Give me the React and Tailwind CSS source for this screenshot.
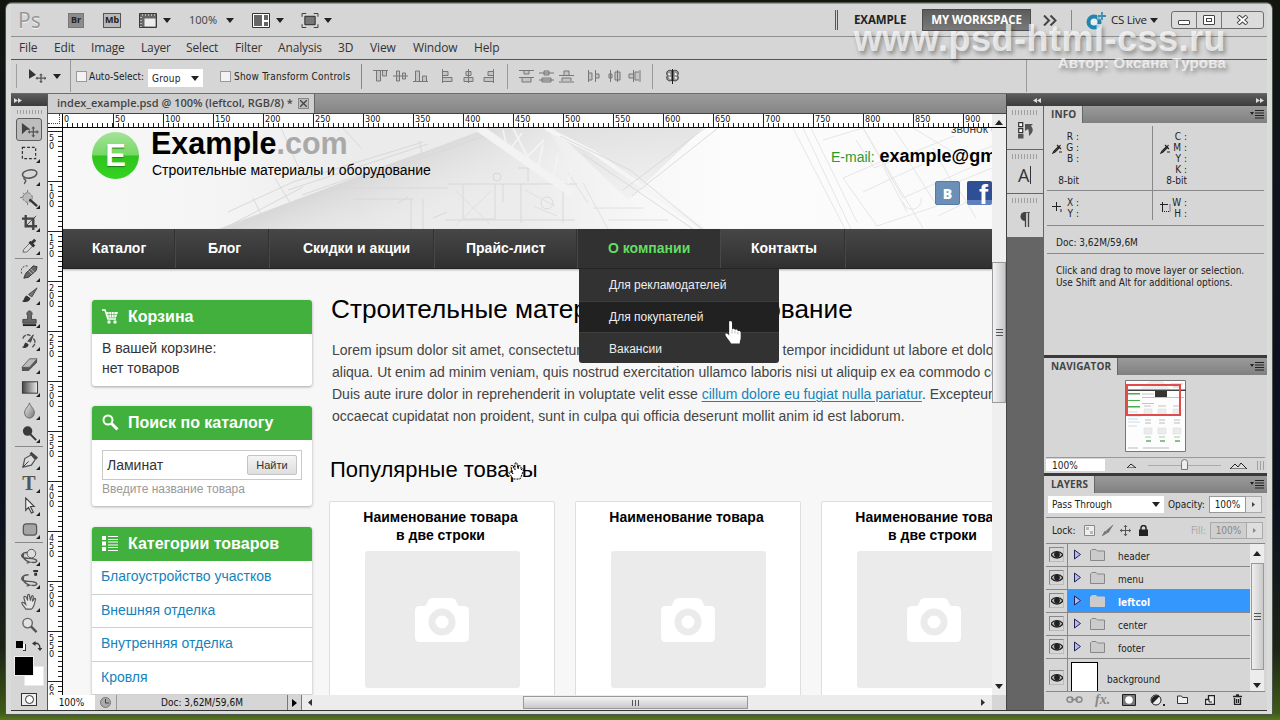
import React from 'react'
import { clsx } from 'clsx'

const menuItems = [
  { label: 'File', width: 'w-[35px]' },
  { label: 'Edit', width: 'w-[37px]' },
  { label: 'Image', width: 'w-[50px]' },
  { label: 'Layer', width: 'w-[45px]' },
  { label: 'Select', width: 'w-[49px]' },
  { label: 'Filter', width: 'w-[43px]' },
  { label: 'Analysis', width: 'w-[60px]' },
  { label: '3D', width: 'w-[32px]' },
  { label: 'View', width: 'w-[43px]' },
  { label: 'Window', width: 'w-[61px]' },
  { label: 'Help', width: 'w-[40px]' }
]

const navItems = [
  { label: 'Каталог', box: 'w-[113px] pl-[29px]' },
  { label: 'Блог', box: 'w-[94px] pl-[32px]' },
  { label: 'Скидки и акции', box: 'w-[165px] pl-[33px]' },
  { label: 'Прайс-лист', box: 'w-[143px] pl-[31px]' },
  { label: 'О компании', box: 'w-[143px] pl-[30px]', active: true },
  { label: 'Контакты', box: 'w-[125px] pl-[30px]' }
]

const categories = ['Благоустройство участков', 'Внешняя отделка', 'Внутренняя отделка', 'Кровля']

const products = [
  ['Наименование товара', 'в две строки'],
  ['Наименование товара'],
  ['Наименование товара', 'в две строки']
]

const layers = ['header', 'menu', 'leftcol', 'center', 'footer']

const hMarks = Array.from({ length: 19 }, (_, i) => i * 50)
const vMarks = Array.from({ length: 12 }, (_, i) => (i + 1) * 50)

const Caret = ({ className }) => (
  <svg className={clsx('h-[5px] w-[8px] shrink-0', className)} viewBox="0 0 8 5">
    <path d="M0 0h8L4 5z" fill="#222" />
  </svg>
)

const Grip = ({ className }) => (
  <div className={clsx('bg-[radial-gradient(#8d8d8d_0.7px,transparent_0.9px)] bg-[length:3px_2px]', className)} />
)

/* ---------- top bars ---------- */

const AppBar = () => (
  <div className="flex h-[33px] shrink-0 items-center border-b border-[#8f8f8f] pl-[7px]">
    <span className="w-[50px] font-['Open_Sans',sans-serif] text-[21px] leading-none text-[#979797] [text-shadow:0_1px_0_#f4f4f4]">Ps</span>
    <div className="flex h-[15px] w-[16px] items-center justify-center border border-[#777] bg-[#8c8c8c] font-['Noto_Sans',sans-serif] text-[9px] font-bold text-[#222]">Br</div>
    <div className="ml-[19px] flex h-[15px] w-[18px] items-center justify-center border border-[#555] bg-[#b9b9b9] font-['Noto_Sans',sans-serif] text-[9px] font-bold text-[#222]">Mb</div>
    <svg className="ml-[18px] h-[15px] w-[18px]" viewBox="0 0 18 15">
      <path d="M.5.5h17v14H.5z" fill="#666" stroke="#3a3a3a" />
      <path d="M5.500 5.500h11v8h-11z" fill="#ececec" />
      <path d="M3 2h14M2 4v10" stroke="#ccc" strokeDasharray="1 2" strokeWidth="1.500" />
    </svg>
    <Caret className="ml-[6px]" />
    <span className="ml-[18px] w-[28px] font-['Noto_Sans',sans-serif] text-[11px] text-[#4a4a4a]">100%</span>
    <Caret className="ml-[9px]" />
    <svg className="ml-[18px] h-[15px] w-[18px]" viewBox="0 0 18 15">
      <path d="M.5.5h17v14H.5z" fill="#fff" stroke="#333" />
      <path d="M2 2h8v11H2zM12 2h4v5h-4zM12 9h4v4h-4z" fill="#666" />
    </svg>
    <Caret className="ml-[6px]" />
    <svg className="ml-[17px] h-[15px] w-[18px]" viewBox="0 0 18 16">
      <path d="M.5 4V.5H5M13 .5h4.500V4M17.500 12v3.500H13M5 15.500H.5V12" fill="none" stroke="#333" />
      <path d="M3.500 3.500h11v9h-11z" fill="#777" stroke="#222" />
    </svg>
    <Caret className="ml-[5px]" />

    <div className="ml-auto mr-[16px] h-[20px] w-[3px] border-x border-[#555]" />
    <span className="w-[68px] font-['Open_Sans',sans-serif] text-[11.500px] font-bold tracking-[-0.1px] text-[#222]">EXAMPLE</span>
    <div className="flex h-[22px] w-[109px] items-center justify-center border border-[#4d4d4d] bg-gradient-to-b from-[#5c5c5c] to-[#7a7a7a] font-['Open_Sans',sans-serif] text-[11.500px] font-bold tracking-[-0.1px] whitespace-nowrap text-white">MY WORKSPACE</div>
    <svg className="ml-[12px] h-[11px] w-[14px]" viewBox="0 0 14 11">
      <path d="M1 .5l5 5-5 5M7.500 .5l5 5-5 5" fill="none" stroke="#444" strokeWidth="2" />
    </svg>
    <div className="ml-[14px] h-[20px] w-px bg-[#888]" />
    <svg className="ml-[14px] h-[19px] w-[20px]" viewBox="0 0 20 19">
      <circle cx="8" cy="11" r="5.500" fill="#e8f0f2" stroke="#2385ab" strokeWidth="4" />
      <path d="M11 1.500h9v7h-9z" fill="#d6d6d6" opacity=".6" />
      <path d="M16 1v8M12 5h8" stroke="#3a92b2" strokeWidth="1.800" />
    </svg>
    <span className="ml-[5px] w-[39px] whitespace-nowrap font-['Open_Sans',sans-serif] text-[11.500px] tracking-[-0.3px] text-[#222]">CS Live</span>
    <Caret />
    <div className="mr-[3px] ml-[13px] flex h-[18px] w-[93px] rounded-[3px] border border-[#6d6d6d] bg-[#dcdcdc]">
      <div className="flex w-[25px] items-center justify-center border-r border-[#777]">
        <div className="mt-[5px] h-[5px] w-[12px] rounded-[1px] border border-[#444] bg-white" />
      </div>
      <div className="flex w-[25px] items-center justify-center border-r border-[#777]">
        <div className="flex h-[10px] w-[12px] items-center justify-center rounded-[1px] border border-[#444] bg-white">
          <div className="h-[4px] w-[6px] border border-[#444]" />
        </div>
      </div>
      <div className="flex flex-1 items-center justify-center">
        <svg className="h-[10px] w-[13px]" viewBox="0 0 13 10">
          <path d="M2 1l9 8M11 1L2 9" stroke="#444" strokeWidth="4" />
          <path d="M2.500 1.500l8 7M10.500 1.500l-8 7" stroke="#fff" strokeWidth="2" />
        </svg>
      </div>
    </div>
  </div>
)

const MenuBar = () => (
  <div className="flex h-[23px] shrink-0 items-center border-b border-[#555] pl-[8px] font-['Open_Sans',sans-serif] text-[12px] tracking-[-0.15px] text-[#333]">
    {menuItems.map(item => (
      <span key={item.label} className={clsx('shrink-0 whitespace-nowrap', item.width)}>{item.label}</span>
    ))}
  </div>
)

const alignIcons = [
  { gap: 'ml-[11px]', d: 'M0 1.500h15M3.500 2v10h4V2M9.500 2v5h4V2' },
  { gap: 'ml-[5px]', d: 'M0 7h15M3.500 2v10h3V2zM9.500 4v6h3V4z' },
  { gap: 'ml-[5px]', d: 'M0 12.500h15M2.500 12V2h4v10M9.500 12V7h4v5' },
  { gap: 'ml-[13px]', d: 'M1.500 0v14M2 2.500h5v4H2M2 8.500h9v4H2' },
  { gap: 'ml-[5px]', d: 'M7.500 0v14M5 2.500h5v4H5zM3 8.500h9v4H3z' },
  { gap: 'ml-[5px]', d: 'M12.500 0v14M12 2.500H7v4h5M12 8.500H3v4h9' }
]

const distributeIcons = [
  { gap: 'ml-[11px]', d: 'M0 1.500h15M0 8.500h15M5 2v3h5V2M3 9v4h9V9' },
  { gap: 'ml-[5px]', d: 'M0 4h15M0 11h15M5 2h5v4H5zM3 9h9v4H3z' },
  { gap: 'ml-[5px]', d: 'M0 6.500h15M0 13h15M5 6V2h5v4M3 12V9h9v3' },
  { gap: 'ml-[13px]', d: 'M1.500 1v12M8.500 1v12M2 4h3v7H2M9 5h3v4H9' },
  { gap: 'ml-[5px]', d: 'M3.500 1v12M10.500 1v12M2 5h3v4H2zM8 3h5v8H8z' },
  { gap: 'ml-[5px]', d: 'M6.500 1v12M13 1v12M6 5H2v4h4M12 3H8v8h4' }
]

const LineIcon = ({ d, gap }) => (
  <svg className={clsx('h-[14px] w-[15px] shrink-0', gap)} viewBox="0 0 15 14">
    <path d={d} fill="#c4c4c4" stroke="#777" />
  </svg>
)

const OptionsBar = () => (
  <div className="flex h-[34px] shrink-0 items-center border-b border-[#6c6c6c] pb-px font-['DejaVu_Sans_Condensed','Noto_Sans',sans-serif] text-[10px] text-[#222]">
    <Grip className="ml-[4px] h-[24px] w-[4px]" />
    <svg className="ml-[9px] h-[14px] w-[18px]" viewBox="0 0 18 16" preserveAspectRatio="none">
      <path d="M1 0l7 6.500-7 4.500z" fill="#333" />
      <path d="M13 6v9M8.500 10.500h9" stroke="#555" strokeWidth="1.300" />
      <path d="M13 5l2 2h-4zM13 16l2-2h-4zM7.500 10.500l2-2v4zM18.500 10.500l-2-2v4z" fill="#555" />
    </svg>
    <Caret className="ml-[7px] h-[4px] w-[6px]" />
    <div className="ml-[9px] h-full w-px bg-[#999]" />
    <div className="ml-[5px] h-[11px] w-[11px] border border-[#999] bg-[#f2f2f2]" />
    <span className="ml-[2px] w-[57px] whitespace-nowrap">Auto-Select:</span>
    <div className="mt-[4px] ml-[2px] flex h-[18px] w-[55px] items-center bg-white pl-[4px]">
      <span className="w-[39px] tracking-[0.3px]">Group</span>
      <Caret />
    </div>
    <div className="ml-[17px] h-[11px] w-[11px] border border-[#999] bg-[#f2f2f2]" />
    <span className="ml-[3px] w-[117px] tracking-[0.200px] whitespace-nowrap">Show Transform Controls</span>
    <div className="ml-[10px] h-[25px] w-px bg-[#888]" />
    {alignIcons.map(icon => <LineIcon key={icon.d} {...icon} />)}
    <div className="ml-[11px] h-[25px] w-px bg-[#999]" />
    {distributeIcons.map(icon => <LineIcon key={icon.d} {...icon} />)}
    <div className="ml-[10px] h-[25px] w-px bg-[#999]" />
    <svg className="ml-[12px] h-[15px] w-[15px]" viewBox="0 0 15 16">
      <path d="M7 2C3 0 0 3 2 7c-2 4 1 7 5 5zM8 2c4-2 7 1 5 5 2 4-1 7-5 5z" fill="#999" stroke="#333" />
      <path d="M7.500 0v16" stroke="#111" />
      <path d="M3 5l2 1M10 5l2 1M4 9l2 1M10 9l2 1" stroke="#fff" strokeWidth="1.500" />
    </svg>
    <div className="mr-[240px] ml-auto h-full w-px bg-[#999]" />
  </div>
)

/* ---------- toolbox ---------- */

const toolGroups = [
  [
    <><path d="M2 2l9 7-4 .5L2 14z" fill="#444" /><path d="M14 7v9M9.500 11.500h9" stroke="#555" strokeWidth="1.300" /><path d="M14 5.500l2 2.500h-4zM14 17.500l2-2.500h-4zM8 11.500l2.500-2v4zM20 11.500l-2.500-2v4z" fill="#555" /></>,
    <path d="M2.500 3.500h14v12h-14z" fill="none" stroke="#333" strokeDasharray="3 2" strokeWidth="1.300" />,
    <path d="M5 11C1 9 2 5 8 3.500s11 .5 9.500 4S9 13 5 11zm0 0c-3 2 2 2 1 4-.5 1-2 2-1 3" fill="none" stroke="#555" strokeWidth="1.500" />,
    <><circle cx="8" cy="8" r="5" fill="#bbb" stroke="#666" strokeDasharray="2 2" /><path d="M8 0v3M8 13v3M0 8h3M3 3l2 2" stroke="#777" /><path d="M10 10l8 7" stroke="#333" strokeWidth="2.500" /></>,
    <><path d="M6 2v12h12M2 6h12v12" fill="none" stroke="#444" strokeWidth="2.500" /><path d="M6 14L17 3" stroke="#444" strokeWidth="1" /></>,
    <><path d="M3 17l1-3 7-7 3 3-7 7z" fill="#ddd" stroke="#666" /><path d="M10 6l5 5M12.500 7.500L16 4" stroke="#333" strokeWidth="3" /></>
  ],
  [
    <><path d="M8 3C2 3 0 7 2 12" fill="none" stroke="#444" strokeDasharray="2 1.500" /><path d="M4 16l2-5 8-8 4 1-1 4-8 7z" fill="#666" stroke="#333" /><path d="M9 8l4 4M11 6l4 4" stroke="#bbb" /></>,
    <><path d="M2 16c3-1 2-5 5-6l4 3c-1 4-5 5-9 3z" fill="#333" /><path d="M9 9l9-7-5.500 9.500z" fill="#777" stroke="#444" /></>,
    <><path d="M10 2a3 3 0 0 1 2 5v4h5v4H3v-4h5V7a3 3 0 0 1 2-5z" fill="#666" stroke="#444" /><path d="M3 17h14" stroke="#222" strokeWidth="2" /></>,
    <><path d="M2 16c3-1 2-4 4-5l3 2c0 3-3 5-7 3z" fill="#333" /><path d="M8 10l6-7-3 8" fill="#555" stroke="#444" /><path d="M3 7a5 5 0 0 1 8-3M14 7c3 2 2 7-1 9" fill="none" stroke="#555" strokeWidth="1.500" strokeDasharray="5 1" /></>,
    <><path d="M2 13l8-9h8l-8 9z" fill="#bbb" stroke="#666" /><path d="M2 13v4h7l9-9V4l-8 9z" fill="#555" /></>,
    <><rect x="2.500" y="4" width="16" height="12" fill="url(#toolGradient)" stroke="#333" /></>,
    <path d="M10 2c1 4 6 7 5 11a5 5 0 0 1-10 0c-1-4 4-7 5-11z" fill="url(#dropGradient)" stroke="#666" />,
    <><circle cx="8" cy="7.500" r="5" fill="#3a3a3a" /><path d="M11 11l6 6" stroke="#333" strokeWidth="2" /></>
  ],
  [
    <><path d="M3 17L5 8l7-4 4 5-4 6z" fill="#ddd" stroke="#555" strokeWidth="1.300" /><path d="M11 2l7 6" stroke="#444" strokeWidth="3" /><path d="M3 17l6-6" stroke="#333" /></>,
    null,
    <path d="M6 1v13l3-3 3 6 2-1-3-6h4z" fill="#eee" stroke="#444" strokeWidth="1.200" />,
    <rect x="3.500" y="4" width="14" height="12" rx="3" fill="#a5a5a5" stroke="#555" strokeWidth="1.300" />
  ],
  [
    <><path d="M9 6C3 5 0 9 3 11s8 0 13 2c4 2 0 4-4 3M4 6c-2 5 1 8 6 10l-3 1" fill="none" stroke="#555" strokeWidth="1.500" /><circle cx="12" cy="7" r="4.500" fill="#ddd" stroke="#555" /></>,
    <><path d="M9 5C3 5 0 9 3 11s8 0 13 2c4 2 0 4-4 3M4 6c-2 5 1 8 6 10l-3 1" fill="none" stroke="#555" strokeWidth="1.500" /><path d="M14 0h5v2h-5zM15 3h3v3h-3z" fill="#333" /></>,
    <path d="M6 17c-1-3-5-5-4-7 1-1 3 1 4 2L4 5c0-2 2-2 3 0l1 3V3c0-2 2-2 2 0l1 5 1-4c1-2 2-1 2 0l-1 5 2-3c1-1 2 0 1 2-1 4-1 7-4 9z" fill="#e4e4e4" stroke="#555" strokeWidth="1.200" />,
    <><circle cx="8" cy="7.500" r="5" fill="#e2e2e2" stroke="#666" strokeWidth="1.500" /><path d="M11.500 11l6 6" stroke="#555" strokeWidth="2.500" /></>
  ]
]

const Toolbox = () => (
  <div className="flex w-[37px] shrink-0 flex-col border-r border-[#555]">
    <div className="flex h-[12px] shrink-0 items-center bg-gradient-to-b from-[#5d5d5d] to-[#3c3c3c] pl-[3px]">
      <svg className="h-[5px] w-[8px]" viewBox="0 0 8 5"><path d="M0 0l4 2.500L0 5zM4 0l4 2.500L4 5z" fill="#ddd" /></svg>
    </div>
    <Grip className="mx-[5px] mt-[4px] mb-[4px] h-[4px] shrink-0" />
    <svg className="absolute size-0">
      <defs>
        <linearGradient id="toolGradient"><stop stopColor="#444" /><stop offset="1" stopColor="#eee" /></linearGradient>
        <linearGradient id="dropGradient" x2="1" y2="1"><stop stopColor="#eee" /><stop offset="1" stopColor="#777" /></linearGradient>
      </defs>
    </svg>
    {toolGroups.map((group, g) => (
      <div key={g} className={clsx('mx-[4px] flex shrink-0 flex-col', g > 0 && 'mt-[2px] border-t border-[#888] pt-px')}>
        {group.map((icon, i) => (
          <div
            key={i}
            className={clsx(
              'relative flex h-[23px] items-center justify-center',
              g === 0 && i === 0 && 'mx-px rounded-[3px] border border-[#5d5d5d] bg-[#bdbdbd]'
            )}
          >
            {icon
              ? <svg className="h-[18px] w-[19px]" viewBox="0 0 20 19">{icon}</svg>
              : <span className="font-['Liberation_Serif',serif] text-[20px] leading-none font-bold text-[#555]">T</span>}
            {!(g === 0 && i === 0) && !(g === 3 && i === 3) && (
              <svg className="absolute right-[3px] bottom-[1px] size-[4px]" viewBox="0 0 4 4"><path d="M4 0v4H0z" fill="#222" /></svg>
            )}
          </div>
        ))}
      </div>
    ))}
    <div className="flex h-[20px] items-center justify-between pr-[5px] pl-[5px]">
      <div className="flex">
        <div className="size-[7px] bg-black" />
        <div className="mt-[3px] h-[7px] w-[3px] border-r border-b border-[#333] bg-white" />
      </div>
      <svg className="h-[10px] w-[10px]" viewBox="0 0 10 10">
        <path d="M2 2.500c4-1 6 1 6 5" fill="none" stroke="#333" strokeWidth="1.300" />
        <path d="M0 2.500L3.500 0v5zM8 10L5.500 7h5z" fill="#333" />
      </svg>
    </div>
    <div className="relative ml-[3px] h-[30px] w-[30px] shrink-0">
      <div className="absolute right-0 bottom-0 size-[20px] border border-[#e8e8e8] bg-white" />
      <div className="absolute top-0 left-0 size-[20px] border border-[#eee] bg-black" />
    </div>
    <div className="mt-[7px] ml-[10px] flex h-[13px] w-[16px] items-center justify-center border border-[#333] bg-[#eee]">
      <div className="size-[9px] rounded-full border border-[#333] bg-white" />
    </div>
  </div>
)

/* ---------- the document ---------- */

const HRuler = () => (
  <div className="flex h-[14px] shrink-0 border-b border-black bg-white">
    <div className="w-[15px] shrink-0 border-r border-black">
      <div className="h-[10px] w-[12px] border-r border-b border-dotted border-[#444]" />
    </div>
    <div className="flex w-[929px] overflow-hidden">
      {hMarks.map(mark => (
        <div key={mark} className="flex w-[50px] shrink-0 flex-col justify-between border-l border-[#222] first:border-l-0">
          <span className="h-[9px] pl-px font-['DejaVu_Sans_Condensed','Noto_Sans',sans-serif] text-[9px] leading-[10px] text-[#111]">{mark}</span>
          <div className="h-[4px] bg-[repeating-linear-gradient(to_right,transparent_0_4px,#222_4px_5px)]" />
        </div>
      ))}
    </div>
    <div className="flex flex-1 items-center justify-center bg-[#ececec]">
      <Caret className="mt-[4px] h-[4px] w-[7px] rotate-180" />
    </div>
  </div>
)

const VRuler = () => (
  <div className="w-[15px] shrink-0 overflow-hidden border-r border-black bg-white">
    <div className="h-[3px]" />
    {vMarks.map(mark => (
      <div key={mark} className="flex h-[50px] justify-between border-t border-[#222]">
        <div className="flex flex-col pt-[2px] pl-px font-['DejaVu_Sans_Condensed','Noto_Sans',sans-serif] text-[9px] leading-[8px] text-[#111]">
          {String(mark).split('').map((digit, i) => <span key={i}>{digit}</span>)}
        </div>
        <div className="w-[4px] bg-[repeating-linear-gradient(to_bottom,transparent_0_4px,#222_4px_5px)]" />
      </div>
    ))}
  </div>
)

const Blueprint = () => (
  <svg className="absolute inset-0 h-full w-full" viewBox="0 0 929 101" preserveAspectRatio="none">
    <defs>
      <linearGradient id="paper">
        <stop offset="0" stopColor="#f7f7f7" />
        <stop offset=".16" stopColor="#f5f5f5" />
        <stop offset=".32" stopColor="#ebebeb" />
        <stop offset=".5" stopColor="#ececec" />
        <stop offset=".62" stopColor="#f7f7f7" />
        <stop offset=".72" stopColor="#fcfcfc" />
        <stop offset="1" stopColor="#fafafa" />
      </linearGradient>
      <linearGradient id="fold" gradientUnits="userSpaceOnUse" x1="300" y1="20" x2="340" y2="110">
        <stop offset="0" stopColor="#d2d2d2" stopOpacity="0" />
        <stop offset=".2" stopColor="#cdcdcd" stopOpacity=".7" />
        <stop offset="1" stopColor="#e6e6e6" stopOpacity="0" />
      </linearGradient>
      <linearGradient id="corner" x1="0" y1="0" x2="0" y2="1">
        <stop offset="0" stopColor="#dadada" />
        <stop offset="1" stopColor="#f0f0f0" />
      </linearGradient>
    </defs>
    <path d="M0 0h929v101H0z" fill="url(#paper)" />
    <path d="M155 101L425 0h60l60 101z" fill="url(#fold)" />
    <path d="M490 0h150l-75 72z" fill="url(#corner)" opacity=".7" />
    <path d="M165 84l65-30 130-40M225 62l140-46M240 72L430 5M218 0l20 45M280 0l18 20M356 13l3 12-120 42M160 101l80-42M212 50l22 36M190 70l12 24" fill="none" stroke="#d9d9d9" />
    <path d="M265 60h120M290 71h60M348 71v30M360 71v30M384 56h130M400 56v35h32V56M458 56v39M382 92h130M465 40v14M455 40h22M440 56v18M500 56v39M335 75l10-6M370 90l14-6" fill="none" stroke="#d8d8d8" />
    <path d="M393 63l35 34m0-34l-35 34M462 62l30 16M470 78l24 10M505 45l20 30M520 55l25 46M530 80h50M545 92h60" stroke="#e0e0e0" fill="none" />
    <path d="M416 0l94 66" stroke="#f3f3f3" strokeWidth="8" fill="none" />
    <path d="M482 0l48 24 110 77" stroke="#f5f5f5" strokeWidth="4" fill="none" />
    <path d="M497 8l70 34 72 59M520 26L630 101M655 0l-86 68M642 0l-82 62" stroke="#d6d6d6" fill="none" strokeWidth=".8" />
    <path d="M440 2l5 22M445 24l14-19M450 0l22 44M463 30l18-18M474 45l6-28M490 50l5-24M505 56l4-19" stroke="#f3f3f3" strokeWidth="1.800" fill="none" />
    <path d="M740 0l48 101M748 0l46 94M730 0l52 101M760 12l40-12 40 70 89-40M800 0l60 100M780 50l60-26 34 54-60 20zM800 64l60-28M820 38l24 46M840 74a9 9 0 1 0 18-4M850 0l50 30 29-12M870 20l20 36 39-16M875 88l54-26M793 12l18 28 80-32M830 0l15 22M895 60l18 30" fill="none" stroke="#e6e6e6" />
    <circle cx="434" cy="49" r="4" fill="none" stroke="#d8d8d8" />
    <circle cx="484" cy="75" r="6" fill="none" stroke="#dadada" />
  </svg>
)

const SiteHeader = () => (
  <div className="relative h-[101px] shrink-0">
    <Blueprint />
    <div className="relative flex h-full">
      <div className="mt-[4px] ml-[29px] flex size-[47px] items-center justify-center rounded-full bg-[linear-gradient(to_bottom,#a5e39a_0%,#77d866_48%,#2fc41d_52%,#34d322_100%)] text-[31px] leading-none font-bold text-white [text-shadow:0_1px_1px_#1c7a12]">E</div>
      <div className="ml-[12px]">
        <p className="mt-[-1px] text-[30.500px] leading-[32px] font-bold text-black">Example<span className="text-[#a9a9a9]">.com</span></p>
        <p className="mt-[3px] ml-px text-[14px] leading-[16px] whitespace-nowrap text-black">Строительные материалы и оборудование</p>
      </div>
      <div className="ml-auto w-[162px] overflow-hidden">
        <p className="mt-[-6px] ml-[121px] h-[14px] text-[12px] leading-[14px] whitespace-nowrap text-[#444]">звонок с</p>
        <p className="mt-[10px] ml-px text-[18px] leading-[20px] font-bold whitespace-nowrap text-black">
          <span className="mr-[5px] text-[14px] font-normal text-[#2a9a2f]">E-mail:</span>example@gmail.com
        </p>
        <div className="mt-[14px] ml-[105px] flex gap-[7px]">
          <div className="flex h-[24px] w-[25px] shrink-0 items-center justify-center rounded-[2px] border border-[#557ba5] bg-[#6c8fb8] font-['Open_Sans',sans-serif] text-[14px] font-extrabold text-white">B</div>
          <div className="h-[24px] w-[25px] shrink-0 overflow-hidden rounded-[2px] bg-[linear-gradient(to_bottom,#2f4f95_0_78%,#5f7fbf_78%)] pl-[12px] text-[27px] leading-[28px] font-bold text-white">f</div>
        </div>
      </div>
    </div>
  </div>
)

const SiteNav = () => (
  <div className="relative z-10 flex h-[40px] shrink-0 border-b border-[#252525] bg-gradient-to-b from-[#474747] to-[#303030] text-[14px] font-bold text-white shadow-[0_1px_2px_rgba(0,0,0,0.3)]">
    {navItems.map(item => (
      <div
        key={item.label}
        className={clsx(
          'flex shrink-0 items-center border-r border-[#484848] whitespace-nowrap shadow-[-1px_0_0_#323232_inset]',
          item.box,
          item.active && 'bg-[#313131] text-[#63dd63]'
        )}
      >
        {item.label}
      </div>
    ))}
    <div className="absolute top-[40px] left-[516px] w-[200px] overflow-hidden rounded-b-[3px] bg-[#323232] text-[12px] font-normal text-[#eee]">
      <p className="h-[32px] pl-[30px] leading-[32px]">Для рекламодателей</p>
      <p className="h-[32px] border-y border-[#3e3e3e] bg-[#212121] pl-[30px] leading-[30px]">Для покупателей</p>
      <p className="h-[30px] pl-[30px] leading-[32px]">Вакансии</p>
    </div>
    <svg className="absolute top-[91px] left-[661px] h-[25px] w-[18px]" viewBox="0 0 18 26">
      <path d="M6 1c1.500 0 2 1 2 2v7l1-1c1 0 2 .5 2 1.500l1-.5c1 0 2 .5 2 1.500 2-.5 3 0 3 2v5c0 2-1 3-1 6H7c-1-3-6-7-6-10 1-1 3 0 4 2V3c0-1 0-2 1-2z" fill="#fff" />
      <path d="M8 10v4M11 11v3M14 12v3" stroke="#999" strokeWidth=".7" />
    </svg>
  </div>
)

const SideHead = ({ title, children }) => (
  <div className="flex h-[34px] shrink-0 items-center rounded-t-[3px] bg-[#41b03c] pb-[1px] pl-[10px] text-[16px] font-bold text-white">
    <svg className="h-[17px] w-[17px]" viewBox="0 0 17 17">{children}</svg>
    <span className="ml-[9px] whitespace-nowrap">{title}</span>
  </div>
)

const Sidebar = () => (
  <div className="flex w-[220px] shrink-0 flex-col text-[14px] text-[#333]">
    <div className="mt-[31px] h-[86px] shrink-0 rounded-[3px] bg-white shadow-[0_1px_3px_rgba(0,0,0,0.35)]">
      <SideHead title="Корзина">
        <path d="M0 2h3l3 9h8" fill="none" stroke="#fff" strokeWidth="1.600" />
        <path d="M4 4h12l-2 5.500H6z" fill="#fff" />
        <path d="M7 4v5M9.500 4v5M12 4v5M5 6.500h10" stroke="#41b03c" strokeWidth=".6" />
        <circle cx="7" cy="14" r="1.700" fill="#fff" /><circle cx="13" cy="14" r="1.700" fill="#fff" />
      </SideHead>
      <p className="mt-[4px] pl-[10px] leading-[20px]">В вашей корзине:<br />нет товаров</p>
    </div>
    <div className="mt-[20px] h-[100px] shrink-0 rounded-[3px] bg-white shadow-[0_1px_3px_rgba(0,0,0,0.3)]">
      <SideHead title="Поиск по каталогу">
        <circle cx="6" cy="6" r="4.500" fill="none" stroke="#fff" strokeWidth="2" />
        <path d="M9.500 9.500l6 6" stroke="#fff" strokeWidth="3" />
      </SideHead>
      <div className="mx-[10px] mt-[10px] flex h-[30px] items-center justify-between border border-[#c9c9c9] pr-[4px] pl-[4px]">
        <span>Ламинат</span>
        <div className="flex h-[20px] w-[50px] items-center justify-center rounded-[2px] border border-[#c4c4c4] bg-gradient-to-b from-[#f4f4f4] to-[#dedede] text-[11px]">Найти</div>
      </div>
      <p className="mt-[1px] pl-[10px] text-[12px] leading-[16px] text-[#999]">Введите название товара</p>
    </div>
    <div className="mt-[21px] shrink-0 rounded-t-[3px] bg-white shadow-[0_1px_3px_rgba(0,0,0,0.3)]">
      <SideHead title="Категории товаров">
        <path d="M0 1h4v4H0zM0 6.500h4v4H0zM0 12h4v4H0zM6 1h10v1H6zM6 4h10v1H6zM6 6.500h10v1H6zM6 9.500h10v1H6zM6 12h10v1H6zM6 15h10v1H6z" fill="#fff" />
      </SideHead>
      {categories.map(name => (
        <p key={name} className="h-[33.500px] border-b border-[#cfcfcf] pl-[9px] leading-[31px] text-[#1583bb]">{name}</p>
      ))}
    </div>
  </div>
)

const ProductCard = ({ lines }) => (
  <div className="h-[260px] w-[226px] shrink-0 rounded-[2px] border border-[#dedede] bg-white text-center text-[14px] leading-[18px] font-bold text-black">
    <div className="mt-[6px] mr-[3px] h-[43px]">
      {lines.map(line => <p key={line}>{line}</p>)}
    </div>
    <div className="ml-[35px] flex h-[137px] w-[155px] items-center justify-center rounded-[3px] bg-[#ebebeb]">
      <svg className="mr-[2px] h-[44px] w-[54px]" viewBox="0 0 54 44">
        <path d="M5 8h5c3-2 2-8 8-8h18c6 0 5 6 8 8h5q5 0 5 5v26q0 5-5 5H5q-5 0-5-5V13q0-5 5-5z" fill="#fff" />
        <circle cx="27" cy="24" r="10" fill="none" stroke="#ebebeb" strokeWidth="7" />
      </svg>
    </div>
  </div>
)

const SiteContent = () => (
  <div className="w-[700px] shrink-0">
    <h1 className="mt-[24px] pl-[2px] text-[26.200px] leading-[32px] whitespace-nowrap text-black">Строительные материалы и оборудование</h1>
    <div className="mt-[14px] pl-[3px] text-[14px] leading-[22px] whitespace-nowrap text-[#444]">
      <p>Lorem ipsum dolor sit amet, consectetur adipisicing elit, sed do eiusmod tempor incididunt ut labore et dolore magna</p>
      <p>aliqua. Ut enim ad minim veniam, quis nostrud exercitation ullamco laboris nisi ut aliquip ex ea commodo consequat.</p>
      <p>Duis aute irure dolor in reprehenderit in voluptate velit esse <span className="text-[#1583bb] underline underline-offset-2">cillum dolore eu fugiat nulla pariatur</span>. Excepteur sint</p>
      <p>occaecat cupidatat non proident, sunt in culpa qui officia deserunt mollit anim id est laborum.</p>
    </div>
    <div className="relative mt-[30px]">
      <h2 className="pl-px text-[22px] leading-[26px] text-black">Популярные товары</h2>
      <svg className="absolute top-[5px] left-[179px] h-[18px] w-[17px]" viewBox="0 0 17 18">
        <path d="M5 17c-1-3-5-6-4-7s3 1 4 2L3 5c0-2 2-2 2 0l2 3V2c0-2 2-2 2 0l1 5 1-3c1-1 2 0 2 1v3l1-1c1-1 2 0 1 2-1 4-2 6-3 8z" fill="#fff" stroke="#000" strokeDasharray="2 1" />
      </svg>
    </div>
    <div className="mt-[18px] flex gap-[20px]">
      {products.map((lines, i) => <ProductCard key={i} lines={lines} />)}
    </div>
  </div>
)

const VScroll = () => (
  <div className="flex w-[14px] shrink-0 flex-col bg-[#efefef]">
    <div className="h-[134px]" />
    <div className="flex h-[141px] flex-col items-center justify-center gap-[2px] border border-[#999] bg-gradient-to-r from-[#f4f4f4] to-[#c6c6c9]">
      <div className="h-px w-[7px] bg-[#555]" />
      <div className="h-px w-[7px] bg-[#555]" />
      <div className="h-px w-[7px] bg-[#555]" />
    </div>
    <div className="flex-1" />
    <Caret className="mx-auto mb-[6px] h-[4px] w-[7px]" />
  </div>
)

const StatusBar = () => (
  <div className="flex h-[15px] shrink-0 items-center bg-[#ececec] font-['DejaVu_Sans_Condensed','Noto_Sans',sans-serif] text-[10px] text-[#111]">
    <div className="flex h-full w-[47px] items-center justify-center bg-white">100%</div>
    <div className="flex h-full w-[22px] items-center justify-center border-r border-[#999] bg-[#d6d6d6]">
      <svg className="size-[11px]" viewBox="0 0 11 11"><circle cx="5.500" cy="5.500" r="5" fill="#aaa" stroke="#777" /><path d="M5.500 2v4H9" stroke="#444" fill="none" /></svg>
    </div>
    <div className="flex h-full w-[171px] items-center justify-center border-r border-[#777] bg-[#d6d6d6]">Doc: 3,62M/59,6M</div>
    <div className="flex h-full w-[14px] items-center justify-center border-r border-[#777] bg-[#d6d6d6]">
      <svg className="h-[8px] w-[5px]" viewBox="0 0 5 8"><path d="M0 0l5 4-5 4z" fill="#000" /></svg>
    </div>
    <svg className="ml-[6px] h-[7px] w-[4px]" viewBox="0 0 4 7"><path d="M4 0v7L0 3.500z" fill="#333" /></svg>
    <div className="ml-[211px] flex h-[13px] w-[225px] items-center justify-center gap-[2px] border border-[#999] bg-gradient-to-b from-[#f4f4f4] to-[#c9c9cc]">
      <div className="h-[6px] w-px bg-[#555]" />
      <div className="h-[6px] w-px bg-[#555]" />
      <div className="h-[6px] w-px bg-[#555]" />
    </div>
    <svg className="mr-[7px] ml-auto h-[7px] w-[4px]" viewBox="0 0 4 7"><path d="M0 0v7l4-3.500z" fill="#333" /></svg>
    <div className="h-full w-[14px] bg-[#d6d6d6]" />
  </div>
)

const DocumentArea = () => (
  <div className="flex w-[959px] shrink-0 flex-col border-r border-[#444]">
    <div className="flex h-[20px] shrink-0 border-b border-[#444] bg-gradient-to-b from-[#9c9c9c] to-[#858585]">
      <div className="flex h-full w-[267px] items-center justify-between border-r border-[#666] bg-[#cfcfcf] pr-[5px] pl-[9px] font-['Open_Sans',sans-serif] text-[11px] font-semibold text-[#444]">
        <span className="whitespace-nowrap">index_example.psd @ 100% (leftcol, RGB/8) *</span>
        <div className="flex size-[11px] items-center justify-center border border-[#888] bg-[#bbb]">
          <svg className="size-[7px]" viewBox="0 0 7 7"><path d="M0 0l7 7M7 0L0 7" stroke="#444" strokeWidth="1.300" /></svg>
        </div>
      </div>
    </div>
    <HRuler />
    <div className="flex min-h-0 flex-1">
      <VRuler />
      <div className="flex w-[929px] shrink-0 flex-col overflow-hidden bg-[#f7f7f7] font-['Liberation_Sans',Arial,sans-serif]">
        <SiteHeader />
        <SiteNav />
        <div className="flex pl-[29px]">
          <Sidebar />
          <div className="ml-[17px]"><SiteContent /></div>
        </div>
      </div>
      <VScroll />
    </div>
    <StatusBar />
  </div>
)

/* ---------- right dock ---------- */

const PanelTab = ({ title, width }) => (
  <div className="flex h-[17px] shrink-0 items-stretch justify-between bg-gradient-to-b from-[#9b9b9b] to-[#808080]">
    <div className={clsx("flex items-center border-r border-[#666] bg-[#d6d6d6] pl-[7px] font-['Open_Sans',sans-serif] text-[10px] font-bold tracking-[0.1px] text-[#444]", width)}>{title}</div>
    <svg className="mt-[4px] mr-[3px] h-[9px] w-[14px]" viewBox="0 0 14 9">
      <path d="M0 2h4L2 5zM5 0h9v1H5zM5 2.500h9v1H5zM5 5h9v1H5zM5 7.500h9v1H5z" fill="#222" />
    </svg>
  </div>
)

const Dropper = () => (
  <svg className="h-[10px] w-[10px]" viewBox="0 0 10 10">
    <path d="M1 9l1-2 4-4 1 1-4 4zM5 1l4 4M7 3l1.500-2" stroke="#222" fill="#eee" strokeWidth="1.200" />
    <path d="M7 8h3" stroke="#222" />
  </svg>
)

const InfoPanel = () => (
  <div className="h-[249px] shrink-0 bg-[#d6d6d6] text-[10px] leading-[11px] text-[#222]">
    <PanelTab title="INFO" width="w-[39px]" />
    <div className="mx-[3px] mt-[3px] flex h-[65px] border-b border-[#888]">
      <div className="flex w-[106px] border-r border-[#888] pl-[5px]">
        <div className="mt-[18px]"><Dropper /></div>
        <div className="w-[17px] pt-[5px] text-right whitespace-nowrap"><p>R :</p><p>G :</p><p>B :</p><p className="mt-[11px] -ml-[12px]">8-bit</p></div>
      </div>
      <div className="flex pl-[7px]">
        <div className="mt-[18px]"><Dropper /></div>
        <div className="w-[17px] pt-[5px] text-right whitespace-nowrap"><p>C :</p><p>M :</p><p>Y :</p><p>K :</p><p className="-ml-[12px]">8-bit</p></div>
      </div>
    </div>
    <div className="mx-[3px] flex h-[35px] border-b border-[#888] pb-[5px]">
      <div className="flex w-[106px] border-r border-[#888] pl-[5px]">
        <svg className="mt-[11px] size-[11px]" viewBox="0 0 11 11"><path d="M4.500 0v9M0 4.500h9M9 7v3" stroke="#222" /></svg>
        <div className="w-[16px] pt-[6px] text-right whitespace-nowrap"><p>X :</p><p>Y :</p></div>
      </div>
      <div className="flex pl-[7px]">
        <svg className="mt-[11px] size-[11px]" viewBox="0 0 11 11"><path d="M0 2.500h8M2.500 0v9" stroke="#222" fill="none" /><path d="M2 9.500h8v-7" stroke="#222" strokeDasharray="1 1" fill="none" /></svg>
        <div className="w-[16px] pt-[6px] text-right whitespace-nowrap"><p>W :</p><p>H :</p></div>
      </div>
    </div>
    <p className="mx-[3px] h-[28px] border-b border-[#888] pt-[11px] pl-[9px]">Doc: 3,62M/59,6M</p>
    <p className="pt-[11px] pl-[12px] leading-[12px] whitespace-nowrap">Click and drag to move layer or selection.<br />Use Shift and Alt for additional options.</p>
  </div>
)

const Thumbnail = () => (
  <svg className="mx-auto mt-[5px] mb-[5px] block h-[72px] w-[61px]" viewBox="0 0 61 72">
    <path d="M.5.5h60v71H.5z" fill="#fdfdfd" stroke="#777" />
    <path d="M25 1l12 0 8 8H15z" fill="#eee" />
    <path d="M1 9.500h60V11H1z" fill="#444" />
    <path d="M3 13h12v1.500H3zM3 20h12v1H3zM3 26h12v1.500H3z" fill="#4aac4a" />
    <path d="M30 11h12v6H30z" fill="#333" />
    <path d="M17 14h12M17 17.500h42M46 4h12M48 7h8M17 23.500h12M19 26h7M33 26h8M48 26h7" stroke="#aaa" strokeWidth=".7" />
    <path d="M3 32h10M3 36h13M3 39h10M3 42h12M3 46h9" stroke="#c9dde8" />
    <path d="M19 29h8v6h-8zM33 29h8v6h-8zM48 29h8v6h-8zM19 48h8v6h-8zM33 48h8v6h-8zM48 48h8v6h-8z" fill="#ececec" stroke="#d8d8d8" strokeWidth=".5" />
    <path d="M20 40h6M34 40h6M49 40h6M20 43h6M34 43h6M49 43h6M20 57h6M34 57h6M49 57h6" stroke="#aaa" strokeWidth=".8" />
    <path d="M21 61h5M35 61h5M50 61h5" stroke="#5ab45a" strokeWidth="1.500" />
    <path d="M3 68h10M18 68h26" stroke="#aaa" strokeWidth=".8" />
    <path d="M2 5h53v30H2z" fill="none" stroke="#e14b4b" strokeWidth="2" />
  </svg>
)

const NavigatorPanel = () => (
  <div className="flex h-[115px] shrink-0 flex-col bg-[#d6d6d6] text-[10px] text-[#222]">
    <PanelTab title="NAVIGATOR" width="w-[74px]" />
    <Thumbnail />
    <div className="mx-[2px] flex h-[15px] items-center border-t border-[#999]">
      <div className="flex h-[12px] w-[59px] items-center bg-white pl-[6px]">100%</div>
      <svg className="ml-[22px] h-[5px] w-[9px]" viewBox="0 0 9 5"><path d="M0 5l4-4 5 4z" fill="#ddd" stroke="#222" /></svg>
      <div className="relative ml-[12px] h-px w-[73px] bg-[#aaa]">
        <div className="absolute top-[-6px] left-[33px] h-[11px] w-[7px] rounded-t-[4px] border border-[#777] bg-[#eee]" />
      </div>
      <svg className="ml-[9px] h-[7px] w-[17px]" viewBox="0 0 17 7"><path d="M0 7l5-5 3 3 3-4 6 6z" fill="#ddd" stroke="#222" /></svg>
      <Grip className="ml-[9px] h-[9px] w-[9px]" />
    </div>
  </div>
)

const Eye = () => (
  <div className="flex h-[15px] w-[15px] items-center justify-center border border-[#bbb] border-t-[#888] border-l-[#888]">
    <svg className="h-[9px] w-[12px]" viewBox="0 0 12 9">
      <path d="M0 5c2-4 9-5 12 0-3 4-9 4-12 0z" fill="#bbb" stroke="#222" strokeWidth="1.300" />
      <circle cx="6" cy="4.500" r="2.900" fill="#222" />
    </svg>
  </div>
)

const LayerRow = ({ name, selected }) => (
  <div className="flex h-[23px] shrink-0 border-b border-[#888]">
    <div className="w-[22px] shrink-0 border-r border-[#888] pt-[3px] pl-[3px]"><Eye /></div>
    <div className={clsx('flex flex-1 items-center', selected && 'bg-[#3497fd] font-bold text-white')}>
      <svg className="mb-[1px] ml-[6px] h-[11px] w-[7px]" viewBox="0 0 7 11"><path d="M.5 1l6 4.500-6 4.500z" fill="#b8b8ea" stroke="#22225a" /></svg>
      <svg className="ml-[9px] h-[12px] w-[15px]" viewBox="0 0 15 12"><path d="M.5 11.500V2L2 .5h4L7.500 2h7v9.500z" fill="#cbcbcb" stroke={selected ? '#ccc' : '#888'} /></svg>
      <span className="mt-[2px] ml-[13px]">{name}</span>
    </div>
  </div>
)

const LayersPanel = () => (
  <div className="flex min-h-0 flex-1 flex-col bg-[#d6d6d6] text-[10px] text-[#222]">
    <PanelTab title="LAYERS" width="w-[51px]" />
    <div className="mx-[2px] flex h-[25px] shrink-0 items-center border-b border-[#888] pb-px">
      <div className="ml-[2px] flex h-[17px] w-[116px] items-center justify-between bg-white pr-[4px] pl-[4px]">Pass Through<Caret className="h-[4px] w-[7px]" /></div>
      <span className="ml-[4px] w-[41px]">Opacity:</span>
      <div className="flex h-[17px] w-[37px] items-center justify-center border border-[#999] bg-white">100%</div>
      <div className="flex h-[17px] w-[16px] items-center justify-center border border-l-0 border-[#aaa] bg-[#e6e6e6]"><svg className="h-[5px] w-[3px]" viewBox="0 0 3 5"><path d="M0 0l3 2.500L0 5z" fill="#444" /></svg></div>
    </div>
    <div className="mx-[2px] flex h-[26px] shrink-0 items-center border-b border-[#888]">
      <span className="ml-[6px] w-[32px]">Lock:</span>
      <svg className="size-[11px]" viewBox="0 0 11 11"><path d="M.5.5h10v10H.5z" fill="#eee" stroke="#888" /><path d="M2 2h3v3H2zM6 6h3v3H6z" fill="#bbb" /></svg>
      <svg className="ml-[7px] h-[11px] w-[12px]" viewBox="0 0 12 11"><path d="M0 11l3-5 2 2zM4 6l7-6-5 8z" fill="#777" stroke="#666" strokeWidth=".5" /></svg>
      <svg className="ml-[6px] size-[11px]" viewBox="0 0 11 11"><path d="M5.500 0v11M0 5.500h11" stroke="#555" /><path d="M5.500 0l2 2h-4zM5.500 11l2-2h-4zM0 5.500l2-2v4zM11 5.500l-2-2v4z" fill="#555" /></svg>
      <svg className="ml-[8px] h-[11px] w-[9px]" viewBox="0 0 9 11"><path d="M2 5V3a2.500 2.500 0 0 1 5 0v2" fill="none" stroke="#222" strokeWidth="1.500" /><path d="M0 4.500h9V11H0z" fill="#222" /></svg>
      <span className="mr-[4px] ml-auto text-[#aaa]">Fill:</span>
      <div className="flex h-[17px] w-[37px] items-center justify-center border border-[#aaa] bg-[#cfcfcf] text-[#888]">100%</div>
      <div className="mr-[2px] flex h-[17px] w-[16px] items-center justify-center border border-l-0 border-[#aaa] bg-[#dedede]"><svg className="h-[5px] w-[3px]" viewBox="0 0 3 5"><path d="M0 0l3 2.500L0 5z" fill="#888" /></svg></div>
    </div>
    <div className="mx-[2px] flex h-[148px] shrink-0 border-b border-[#888]">
      <div className="flex w-[204px] flex-col overflow-hidden">
        {layers.map(name => <LayerRow key={name} name={name} selected={name === 'leftcol'} />)}
        <div className="flex h-[34px]">
          <div className="w-[22px] shrink-0 border-r border-[#888] pt-[11px] pl-[3px]"><Eye /></div>
          <div className="mt-[3px] ml-[3px] h-[35px] w-[27px] border border-black bg-white" />
          <span className="mt-[13px] ml-[9px]">background</span>
        </div>
      </div>
      <div className="flex w-[14px] flex-col items-center bg-[#ececec]">
        <Caret className="mt-[7px] h-[4px] w-[7px] rotate-180" />
        <div className="mt-[7px] flex h-[107px] w-[13px] flex-col items-center justify-center gap-[2px] border border-[#999] bg-gradient-to-r from-[#efefef] to-[#cacaca]">
          <div className="h-px w-[7px] bg-[#555]" />
          <div className="h-px w-[7px] bg-[#555]" />
          <div className="h-px w-[7px] bg-[#555]" />
        </div>
        <Caret className="mt-[13px] h-[4px] w-[7px]" />
      </div>
    </div>
    <div className="flex flex-1 items-center pb-[3px] pl-[22px]">
      <svg className="h-[7px] w-[17px]" viewBox="0 0 17 7"><path d="M1 3.500C1 0 7 0 7 3.500S1 7 1 3.500zM10 3.500c0-3.500 6-3.500 6 0s-6 3.500-6 0zM5 3.500h7" fill="none" stroke="#888" strokeWidth="1.500" /></svg>
      <span className="ml-[12px] w-[27px] font-['Liberation_Serif',serif] text-[14px] leading-none font-bold text-[#888] italic">fx.</span>
      <svg className="h-[12px] w-[14px]" viewBox="0 0 14 12"><path d="M.5.5h13v11H.5z" fill="#777" stroke="#222" /><circle cx="7" cy="6" r="3.800" fill="#fff" /></svg>
      <svg className="ml-[14px] h-[12px] w-[15px]" viewBox="0 0 15 12"><circle cx="6" cy="6" r="5" fill="#eee" stroke="#222" /><path d="M2.500 9.500a5 5 0 0 1 7-7z" fill="#222" /><path d="M13 11h2" stroke="#222" strokeWidth="2" /></svg>
      <svg className="ml-[12px] h-[9px] w-[11px]" viewBox="0 0 11 9"><path d="M.5 8.500V1h4l1 1.500h5v6z" fill="#eee" stroke="#333" /></svg>
      <svg className="ml-[17px] h-[10px] w-[10px]" viewBox="0 0 10 10"><path d="M.5 9.500v-5h3v-4h6v9z" fill="#eee" stroke="#222" strokeWidth="1.300" /><path d="M4 4v3h3" stroke="#222" fill="none" /></svg>
      <svg className="ml-[18px] h-[11px] w-[9px]" viewBox="0 0 9 11"><path d="M0 2.500h9M3 1h3M1.500 4v6.500h6V4M3.500 5v4M5.500 5v4" fill="none" stroke="#222" strokeWidth="1.300" /></svg>
    </div>
  </div>
)

const Dock = () => (
  <div className="flex min-w-0 flex-1 flex-col">
    <div className="flex h-[12px] shrink-0 items-center bg-gradient-to-b from-[#5d5d5d] to-[#3c3c3c]">
      <svg className="ml-[26px] h-[5px] w-[8px]" viewBox="0 0 8 5"><path d="M4 0v5L0 2.500zM8 0v5L4 2.500z" fill="#ddd" /></svg>
      <svg className="mr-[3px] ml-auto h-[5px] w-[8px]" viewBox="0 0 8 5"><path d="M0 0l4 2.500L0 5zM4 0l4 2.500L4 5z" fill="#ddd" /></svg>
    </div>
    <div className="flex min-h-0 flex-1 bg-[#3a3a3a] font-['DejaVu_Sans_Condensed','Noto_Sans',sans-serif]">
      <div className="flex w-[37px] shrink-0 flex-col bg-[#656565] pr-px">
        <div className="h-[43px] bg-[#d6d6d6] px-[4px] pt-[4px]">
          <Grip className="h-[5px]" />
          <svg className="mt-[7px] ml-[7px] h-[17px] w-[16px]" viewBox="0 0 16 17">
            <path d="M.7.7h4v4h-4zM.7 6.700h4v4h-4z" fill="#fff" stroke="#333" strokeWidth="1.200" /><path d="M0 12h5.500v4.500H0z" fill="#555" />
            <path d="M7 2h8l-2 2c3 3 2 7-2 10 0-4 0-5-1-7L7 9z" fill="#555" />
          </svg>
        </div>
        <div className="mt-px h-[43px] bg-[#d6d6d6] px-[4px] pt-[4px]">
          <Grip className="h-[5px]" />
          <p className="mt-[7px] ml-[7px] w-[13px] border-r-[1.5px] border-[#333] font-['Open_Sans',sans-serif] text-[18px] leading-[18px] text-[#333]">A</p>
        </div>
        <div className="mt-px h-[43px] bg-[#d6d6d6] px-[4px] pt-[4px]">
          <Grip className="h-[5px]" />
          <svg className="mt-[9px] ml-[8px] h-[15px] w-[11px]" viewBox="0 0 11 15"><path d="M6 0h5M6.500 0v15M9.500 0v15" stroke="#444" strokeWidth="1.300" /><path d="M6 0a4.500 4.500 0 0 0 0 9z" fill="#444" /></svg>
        </div>
      </div>
      <div className="flex min-w-0 flex-1 flex-col gap-[3px]">
        <InfoPanel />
        <NavigatorPanel />
        <LayersPanel />
      </div>
    </div>
  </div>
)

const App = () => {
  return (
    <div className="relative h-[720px] w-[1280px] overflow-hidden bg-[linear-gradient(to_bottom,#12160f_0%,#10131f_30%,#0b1020_70%,#1c2416_90%,#3f5a16_99%,#56761e_100%)]">
      <div className="flex h-full pt-[3px] pr-[8px] pb-[6px] pl-[6px]">
        <div className="flex flex-1 flex-col rounded-t-[6px] border-x-5 border-t border-b-3 border-[#d9dcd9] border-t-[#999] bg-[#d6d6d6] shadow-[0_0_0_1px_#4d544d]">
          <AppBar />
          <MenuBar />
          <OptionsBar />
          <div className="flex min-h-0 flex-1 border-b border-[#333]">
            <Toolbox />
            <DocumentArea />
            <Dock />
          </div>
        </div>
      </div>
      <div className="absolute top-[19px] right-[54px] text-right font-['Liberation_Sans',Arial,sans-serif] font-bold text-white/70 [text-shadow:2px_3px_4px_rgba(0,0,0,0.35)]">
        <p className="text-[36px] leading-[40px] tracking-[0.5px]">www.psd-html-css.ru</p>
        <p className="mt-[-4px] text-[15px] leading-[16px] tracking-[0.200px]">Автор: Оксана Турова</p>
      </div>
    </div>
  )
}

export default App
